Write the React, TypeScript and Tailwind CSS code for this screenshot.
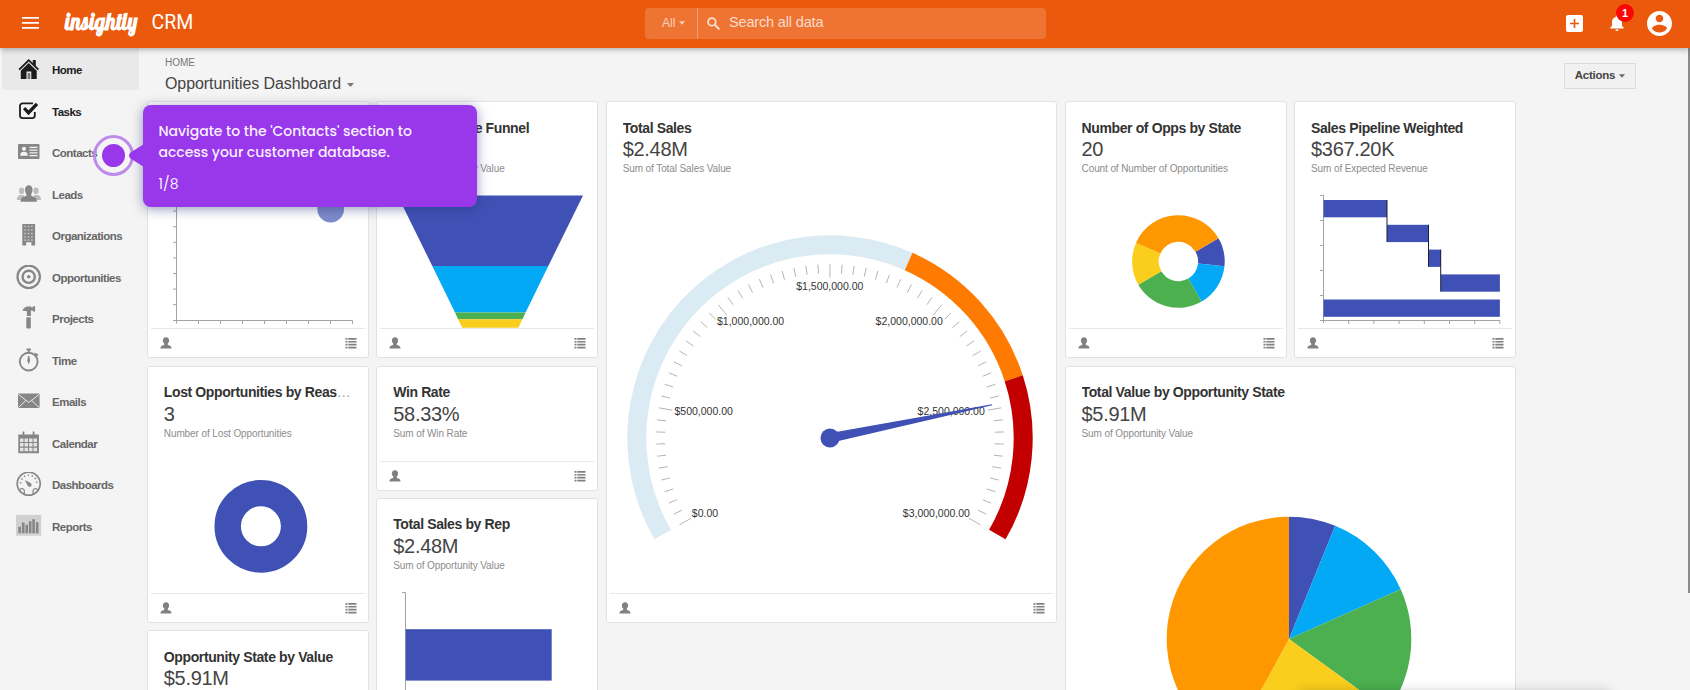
import type { ReactNode } from 'react';
import clsx from 'clsx';

const BLUE = '#3f51b5';
const SKY = '#03a9f4';
const GREEN = '#4caf50';
const YELLOW = '#f9ce1d';
const ORANGE = '#ff9800';

// Angles are clockwise degrees from twelve o'clock
function polar(cx: number, cy: number, r: number, deg: number) {
    const rad = (deg * Math.PI) / 180;
    return [cx + r * Math.sin(rad), cy - r * Math.cos(rad)];
}

function arcPath(cx: number, cy: number, outer: number, inner: number, from: number, to: number) {
    const [x1, y1] = polar(cx, cy, outer, from);
    const [x2, y2] = polar(cx, cy, outer, to);
    const [x3, y3] = polar(cx, cy, inner, to);
    const [x4, y4] = polar(cx, cy, inner, from);
    const large = to - from > 180 ? 1 : 0;
    return `M${x1} ${y1}A${outer} ${outer} 0 ${large} 1 ${x2} ${y2}L${x3} ${y3}A${inner} ${inner} 0 ${large} 0 ${x4} ${y4}Z`;
}

/* ---------- Sidebar ---------- */

const navItems: { label: string; icon: ReactNode }[] = [
    {
        label: 'Home',
        icon: (
            <>
                <path d="M12.7 2 2.5 12l1.3 1.3 9-8.7 8.9 8.7L23 12l-3.2-3.2V3h-3v2.9z" />
                <path d="M4.8 13.7v8.3h5.7v-7.5h4.8V22h5.4v-8.3l-8-7.6z" />
                <path d="M11.7 16h2.5v6h-2.5z" opacity=".55" />
            </>
        ),
    },
    {
        label: 'Tasks',
        icon: (
            <>
                <path d="M17 4.4H6.5A2.5 2.5 0 0 0 4 6.9v9.7a2.5 2.5 0 0 0 2.5 2.5h9.8a2.5 2.5 0 0 0 2.5-2.5V13" fill="none" stroke="currentColor" strokeWidth="1.8" />
                <path d="m7 10.2 2.2-2.1 3.3 3.2 7.3-7.6L22.2 6l-9.7 10.3z" />
            </>
        ),
    },
    {
        label: 'Contacts',
        icon: (
            <>
                <rect x="2" y="4" width="21.5" height="15" rx="1" />
                <circle cx="8" cy="8.8" r="2.1" fill="#f4f4f4" />
                <path d="M4.2 15.7c0-3 1.5-3.9 3.8-3.9s3.8.9 3.8 3.9z" fill="#f4f4f4" />
                <path d="M13.5 7.3h8M13.5 10.1h8M13.5 12.9h8M13.5 15.7h8" stroke="#f4f4f4" strokeWidth="1.2" />
            </>
        ),
    },
    {
        label: 'Leads',
        icon: (
            <>
                <g opacity=".5">
                    <ellipse cx="5.6" cy="8.8" rx="2.6" ry="3.4" />
                    <ellipse cx="20" cy="8.8" rx="2.6" ry="3.4" />
                    <path d="M1 18c0-3.8 1.3-4.1 3.3-5h3.6v5zM25 18c0-3.8-1.3-4.1-3.3-5h-3.6v5z" />
                </g>
                <ellipse cx="12.8" cy="8" rx="3.8" ry="4.8" />
                <path d="M4.6 19.7c0-4 1.8-4.4 5.8-6V11h4.8v2.7c4 1.6 5.8 2 5.8 6z" />
            </>
        ),
    },
    {
        label: 'Organizations',
        icon: (
            <>
                <path d="M6.3 1h12.8v21.6h-3.7v-3.4h-5.3v3.4H6.3z" />
                <path d="M8.2 3.5h9M8.2 7h9M8.2 10.5h9M8.2 14h9M8.2 17.2h9" stroke="#f4f4f4" strokeWidth="1.7" strokeDasharray="1.8 1.6" opacity=".5" />
            </>
        ),
    },
    {
        label: 'Opportunities',
        icon: (
            <>
                <circle cx="12.7" cy="11.8" r="11.2" fill="none" stroke="currentColor" strokeWidth="2.2" />
                <circle cx="12.7" cy="11.8" r="6.1" fill="none" stroke="currentColor" strokeWidth="2.4" />
                <circle cx="12.7" cy="11.8" r="1.8" />
            </>
        ),
    },
    {
        label: 'Projects',
        icon: (
            <path d="M6.4 4.7C7.2 1.9 9.5.3 12.3.4h3v1.2h1.5V.2h2.3v5.4h-2.3V4.4h-1.9v5.5h-4V5.3C9 4.6 7.8 4.6 6.4 4.7zM10.3 11.2h4.5v10a1.4 1.4 0 0 1-1.4 1.4h-1.7a1.4 1.4 0 0 1-1.4-1.4z" />
        ),
    },
    {
        label: 'Time',
        icon: (
            <>
                <circle cx="12.7" cy="13.6" r="8.9" fill="none" stroke="currentColor" strokeWidth="1.9" />
                <path d="M10.5.6h4.4v1.9h-1.3v3h-1.8v-3h-1.3zM18.6 4.6l3.8 1.8-1.1 2.2-2.7-2.1zM12 8h1.4l.7 4.8-1.4 3.8-1.4-3.8z" />
            </>
        ),
    },
    {
        label: 'Emails',
        icon: (
            <>
                <rect x="2" y="4.6" width="21.6" height="14.4" rx="1" />
                <path d="m2.5 5.5 10.3 8 10.3-8M2.5 18.5l7.5-7.2M23.1 18.5l-7.5-7.2" fill="none" stroke="#f4f4f4" strokeWidth=".9" />
            </>
        ),
    },
    {
        label: 'Calendar',
        icon: (
            <>
                <path d="M2.3 3.4h20.6v18.9H2.3zM6.6.5h1.8v3H6.6zM16.7.5h1.8v3h-1.8z" />
                <path d="M4 7.4h3.5v3.5H4zM8.5 7.4H12v3.5H8.5zM13 7.4h3.5v3.5H13zM17.5 7.4H21v3.5h-3.5zM4 12h3.5v3.5H4zM8.5 12H12v3.5H8.5zM13 12h3.5v3.5H13zM17.5 12H21v3.5h-3.5zM4 16.7h3.5v3.5H4zM8.5 16.7H12v3.5H8.5zM13 16.7h3.5v3.5H13zM17.5 16.7H21v3.5h-3.5z" fill="#f4f4f4" opacity=".85" />
            </>
        ),
    },
    {
        label: 'Dashboards',
        icon: (
            <>
                <circle cx="12.7" cy="11.7" r="11.5" fill="none" stroke="currentColor" strokeWidth="1.7" />
                <path d="M4.6 11.4a8.1 8.1 0 0 1 16.2 0" fill="none" stroke="currentColor" strokeWidth="1.6" strokeDasharray="1.3 2.6" />
                <path d="m8.8 8 5.8 3.1a2 2 0 1 1-2.8 2.6z" />
                <path d="M3.6 18.3c.8-2.3 4.4-2.2 4.7.2v3.4M21.8 18.3c-.8-2.3-4.4-2.2-4.7.2v3.4" fill="none" stroke="currentColor" strokeWidth="1.2" />
            </>
        ),
    },
    {
        label: 'Reports',
        icon: (
            <>
                <path d="M0 .9h25.2v20.8H0z" opacity=".32" />
                <path d="M2.3 12.7h2.6v6.6H2.3zM5.9 8.6h2.6v10.7H5.9zM9.4 10.7H12v8.6H9.4zM12.9 7.3h2.6v12h-2.6zM16.3 5.2h2.6v14.1h-2.6zM19.9 8.3h2.6v11h-2.6z" />
            </>
        ),
    },
];

function Sidebar() {
    return (
        <nav className="w-[139px] shrink-0 pl-0.5">
            {navItems.map(({ label, icon }, i) => (
                <a
                    key={label}
                    className={clsx(
                        'flex h-[41.5px] items-center rounded-b pl-3.5',
                        i === 0 && 'bg-[#e9e9e9]',
                        i < 2 ? 'text-[#1c1c1c]' : 'text-[#666]',
                    )}
                >
                    <svg
                        className={clsx('mt-[3px] h-[26px] w-[26px] shrink-0', i > 1 && 'text-[#868686]')}
                        viewBox="0 0 26 26"
                        fill="currentColor"
                    >
                        {icon}
                    </svg>
                    <span className="mt-1 ml-2.5 text-[11.5px] font-bold tracking-[-0.5px]">{label}</span>
                </a>
            ))}
        </nav>
    );
}

/* ---------- Header ---------- */

function Caret({ className }: { className?: string }) {
    return (
        <svg className={clsx('h-[4px]', className)} viewBox="0 0 7 4" fill="currentColor">
            <path d="M0 0h7L3.5 4z" />
        </svg>
    );
}

function Header() {
    return (
        <header className="relative z-10 flex h-12 items-center bg-[#eb5a0c] pb-0.5 text-white shadow-[0_1px_6px_rgba(0,0,0,0.35)]">
            <div className="flex w-[645px] items-center">
                <svg className="ml-[22px] h-3 w-[17px]" viewBox="0 0 17 12" fill="currentColor">
                    <path d="M0 0h17v1.7H0zM0 5h17v1.7H0zM0 10h17v1.7H0z" />
                </svg>
                <span className="-mt-0.5 ml-[26px] inline-block w-[73px] origin-left scale-x-[0.9] font-[Lobster,Lato,sans-serif] text-[23.5px] leading-none font-bold whitespace-nowrap">
                    insightly
                </span>
                <span className="ml-[13.5px] font-[Roboto,sans-serif] text-[19.5px] leading-none">CRM</span>
            </div>
            <div className="flex h-[31px] w-[401px] items-center rounded-sm bg-white/16 text-white/75">
                <div className="flex h-full w-[53px] items-center border-r border-white/30 pl-[17px] text-xs text-white/65">
                    All
                    <Caret className="ml-1 w-[6px]" />
                </div>
                <svg className="ml-[9px] h-[13px] w-[13px]" viewBox="0 0 12 12" fill="none" stroke="currentColor">
                    <circle cx="4.5" cy="4.5" r="3.5" strokeWidth="1.7" />
                    <path d="m7.2 7.2 4.2 4.2" strokeWidth="2" />
                </svg>
                <span className="ml-[9px] text-[14.5px] tracking-[-0.16px]">Search all data</span>
            </div>
            <div className="ml-auto flex items-center pr-[18px]">
                <svg className="h-[17px] w-[17px]" viewBox="0 0 17 17">
                    <rect width="17" height="17" rx="2" fill="#fff" />
                    <path d="M8.5 4v9M4 8.5h9" stroke="#eb5a0c" strokeWidth="1.7" />
                </svg>
                <div className="relative ml-[27px]">
                    <svg className="h-4 w-3.5" viewBox="0 0 14 16" fill="#fff">
                        <path d="M7 .2a1.2 1.2 0 0 0-1.2 1.2v.5C3.4 2.5 2 4.5 2 7v4L.3 12.6v.9h13.4v-.9L12 11V7c0-2.5-1.4-4.5-3.8-5.1v-.5A1.2 1.2 0 0 0 7 .2zM5.4 14.4a1.6 1.6 0 0 0 3.2 0z" />
                    </svg>
                    <span className="absolute -top-[11px] left-[6px] flex h-[18px] w-[18px] items-center justify-center rounded-full bg-[#fb0505] text-[11px] font-bold">
                        1
                    </span>
                </div>
                <svg className="ml-[23px] h-[25px] w-[25px]" viewBox="2 2 20 20" fill="#fff">
                    <path d="M12 2C6.48 2 2 6.48 2 12s4.48 10 10 10 10-4.48 10-10S17.52 2 12 2zm0 3c1.66 0 3 1.34 3 3s-1.34 3-3 3-3-1.34-3-3 1.34-3 3-3zm0 14.2c-2.5 0-4.71-1.28-6-3.22.03-1.99 4-3.08 6-3.08 1.99 0 5.97 1.09 6 3.08-1.29 1.94-3.5 3.22-6 3.22z" />
                </svg>
            </div>
        </header>
    );
}

/* ---------- Cards ---------- */

type CardProps = {
    title: string;
    value?: string;
    caption?: string;
    className?: string;
    children?: ReactNode;
};

function Card({ title, value, caption, className, children }: CardProps) {
    return (
        <section className={clsx('flex flex-col rounded-[3px] border border-[#e2e2e2] bg-white', className)}>
            <div className="h-20 shrink-0 pt-[16.2px] pr-[17px] pl-[15.8px]">
                <h2 className="truncate text-sm leading-[18.6px] tracking-[-0.38px] text-[#999]">
                    <span className="font-bold text-[#333]">{title}</span>
                </h2>
                <p className="h-6 text-[20px] leading-6 tracking-[-0.3px] text-[#444]">{value}</p>
                <p className="text-[10px] leading-[15px] tracking-[-0.1px] text-[#8c8c8c]">{caption}</p>
            </div>
            <div className="min-h-0 flex-1">{children && <svg className="block h-full w-full">{children}</svg>}</div>
            <div className="mx-[3px] flex h-[29px] shrink-0 items-center justify-between border-t border-[#e8e8e8] pr-2 pl-[9px] text-[#808080]">
                <svg className="h-3 w-3" viewBox="0 0 12 12" fill="currentColor">
                    <path d="M6 .3c2.1 0 3.1 1.4 3.1 3.2 0 1.4-.6 2.5-1.3 3.1v1.3c2.6.9 3.7 1 3.7 3.6H.5c0-2.6 1.1-2.7 3.7-3.6V6.6C3.5 6 2.9 4.9 2.9 3.5 2.9 1.7 3.9.3 6 .3z" />
                </svg>
                <svg className="h-3 w-3" viewBox="0 0 12 12" fill="currentColor">
                    <path d="M.5 1h2v1.7h-2zM3.3 1h8.2v1.7H3.3zM.5 3.9h2v1.7h-2zM3.3 3.9h8.2v1.7H3.3zM.5 6.8h2v1.7h-2zM3.3 6.8h8.2v1.7H3.3zM.5 9.7h2v1.7h-2zM3.3 9.7h8.2v1.7H3.3z" />
                </svg>
            </div>
        </section>
    );
}

function BubbleChart() {
    return (
        <>
            <g stroke="#a0a4a4">
                <path d="M28.5 12.5v129M25 138.5h179.5" fill="none" />
                {Array.from({ length: 8 }, (_, i) => (
                    <path key={i} d={`M25 ${13.5 + i * 15.6}h3.5`} />
                ))}
                {Array.from({ length: 8 }, (_, i) => (
                    <path key={i} d={`M${50.5 + i * 22} 138.5v3.5`} />
                ))}
            </g>
            <circle cx="182.7" cy="27.2" r="13.3" fill="#7f8ccb" />
        </>
    );
}

function FunnelChart() {
    const levels = [
        { y: 13.5, half: 92.7, color: BLUE },
        { y: 84, half: 58, color: SKY },
        { y: 130.4, half: 35.3, color: GREEN },
        { y: 137.2, half: 32.2, color: YELLOW },
        { y: 145.8, half: 28, color: '' },
    ];
    const cx = 113.3;
    return (
        <>
            {levels.slice(0, -1).map((a, i) => {
                const b = levels[i + 1];
                return (
                    <path
                        key={a.color}
                        d={`M${cx - a.half} ${a.y}H${cx + a.half}L${cx + b.half} ${b.y}H${cx - b.half}Z`}
                        fill={a.color}
                    />
                );
            })}
        </>
    );
}

type SlicesProps = {
    cx: number;
    cy: number;
    outer: number;
    inner: number;
    stops: [number, number, string][];
};

function Slices({ cx, cy, outer, inner, stops }: SlicesProps) {
    return (
        <>
            {stops.map(([from, to, color]) => (
                <path key={from} d={arcPath(cx, cy, outer, inner, from, to)} fill={color} />
            ))}
        </>
    );
}

const gaugeLabels: [string, number, number][] = [
    ['$0.00', 98, 334.8],
    ['$500,000.00', 96.7, 233],
    ['$1,000,000.00', 143.6, 143],
    ['$1,500,000.00', 222.8, 108],
    ['$2,000,000.00', 302.2, 143],
    ['$2,500,000.00', 344.2, 233],
    ['$3,000,000.00', 329.4, 334.8],
];

function GaugeChart() {
    const cx = 223;
    const cy = 256;
    return (
        <>
            <path d={arcPath(cx, cy, 202.7, 183.7, -120, 24)} fill="#dbebf3" />
            <path d={arcPath(cx, cy, 202.7, 183.7, 24, 72)} fill="#ff7a00" />
            <path d={arcPath(cx, cy, 202.7, 183.7, 72, 120)} fill="#c20000" />
            {Array.from({ length: 61 }, (_, i) => {
                const major = i % 10 === 0;
                const [x1, y1] = polar(cx, cy, 173.8, i * 4 - 120);
                const [x2, y2] = polar(cx, cy, major ? 160.5 : 164.8, i * 4 - 120);
                return <path key={i} d={`M${x1} ${y1}L${x2} ${y2}`} stroke="#b5b5b5" />;
            })}
            {gaugeLabels.map(([text, x, y]) => (
                <text key={text} x={x} y={y} textAnchor="middle" className="fill-[#333] text-[10.5px]">
                    {text}
                </text>
            ))}
            <path d="M0 -4.8V4.8L165.5 .5V-.5Z" transform={`translate(${cx} ${cy}) rotate(-11.6)`} fill={BLUE} />
            <circle cx={cx} cy={cy} r="9.5" fill={BLUE} />
        </>
    );
}

function WaterfallChart() {
    const bars = [
        [28.5, 18, 63.5],
        [92, 42.8, 41.7],
        [133.7, 67.6, 12.2],
        [145.9, 92.4, 59],
        [28.5, 117.5, 176.4],
    ];
    return (
        <>
            <g stroke="#a0a4a4" fill="none">
                <path d="M28.5 13v128M25 138.5h180" />
                {Array.from({ length: 5 }, (_, i) => (
                    <path key={i} d={`M25 ${13.5 + i * 25}h3.5`} />
                ))}
                {Array.from({ length: 7 }, (_, i) => (
                    <path key={i} d={`M${53.7 + i * 25.2} 138.5v3.5`} />
                ))}
            </g>
            {bars.map(([x, y, w]) => (
                <rect key={y} x={x} y={y} width={w} height="17.3" fill={BLUE} />
            ))}
            <path d="M92 18v42M133.5 42.8v42M145.7 67.6v42" stroke="#1c1f33" />
        </>
    );
}

function HBarChart() {
    return (
        <>
            <path d="M25 13.5h3.5V160" stroke="#a0a4a4" fill="none" />
            <rect x="28.7" y="50.2" width="146" height="51.4" fill={BLUE} />
        </>
    );
}

function Tour() {
    return (
        <>
            <div className="absolute top-[135px] left-[92.5px] z-20 flex h-[41px] w-[41px] items-center justify-center rounded-full border-[3px] border-[#bd8beb]">
                <div className="h-[23px] w-[23px] shrink-0 rounded-full bg-[#9937ea]" />
            </div>
            <div className="absolute top-[105px] left-[143px] z-20 h-[101.5px] w-[334px] rounded-lg bg-[#9937ea] px-[15.5px] pt-4 font-[Poppins,Inter,sans-serif] text-sm leading-[21px] text-[#f8efff] shadow-[0_2px_12px_rgba(40,50,120,0.5)]">
                <p className="font-medium tracking-[-0.03px] whitespace-nowrap">
                    Navigate to the 'Contacts' section to
                    <br />
                    access your customer database.
                </p>
                <p className="mt-[11px]">1/8</p>
                <svg className="absolute top-[39px] -left-3.5 h-[23px] w-[15px]" viewBox="0 0 15 23" fill="#9937ea">
                    <path d="M15 0v23L1.5 14.5q-3-3 0-6z" />
                </svg>
            </div>
        </>
    );
}

export default function App() {
    return (
        <div className="relative h-[690px] w-[1690px] overflow-hidden bg-[#f4f4f4] font-['Liberation_Sans',Arial,sans-serif]">
            <Header />
            <div className="flex">
                <Sidebar />
                <main className="flex-1 pl-2">
                    <div className="flex h-[53.4px] items-start justify-between pr-[54px] pl-[18px]">
                        <div>
                            <p className="mt-[7.5px] text-[10px] leading-[14px] text-[#777]">HOME</p>
                            <h1 className="mt-1 flex items-center text-base leading-5 tracking-[-0.08px] text-[#444]">
                                Opportunities Dashboard
                                <Caret className="mt-0.5 ml-[6px] w-[7px] text-[#777]" />
                            </h1>
                        </div>
                        <button className="mt-[15px] flex h-[26px] w-[72px] items-center justify-center border border-[#dcdcdc] bg-[#f1f1f1] text-[11.5px] font-bold tracking-[-0.25px] text-[#444]">
                            Actions
                            <Caret className="ml-1 w-[6px] text-[#666]" />
                        </button>
                    </div>
                    <div className="grid auto-rows-[124.65px] grid-cols-[repeat(6,221.85px)] gap-[7.6px]">
                        <Card title="Opportunities" className="row-span-2">
                            <BubbleChart />
                        </Card>
                        <Card title="Sales Pipeline Funnel" caption="Sum of Opportunity Value" className="row-span-2">
                            <FunnelChart />
                        </Card>
                        <Card title="Total Sales" value="$2.48M" caption="Sum of Total Sales Value" className="col-span-2 row-span-4">
                            <GaugeChart />
                        </Card>
                        <Card title="Number of Opps by State" value="20" caption="Count of Number of Opportunities" className="row-span-2">
                            <Slices
                                cx={112.4}
                                cy={79.5}
                                outer={46.3}
                                inner={19.7}
                                stops={[
                                    [60, 96, BLUE],
                                    [96, 150, SKY],
                                    [150, 240, GREEN],
                                    [240, 294, YELLOW],
                                    [294, 420, ORANGE],
                                ]}
                            />
                        </Card>
                        <Card title="Sales Pipeline Weighted" value="$367.20K" caption="Sum of Expected Revenue" className="row-span-2">
                            <WaterfallChart />
                        </Card>
                        <Card title="Lost Opportunities by Reason" value="3" caption="Number of Lost Opportunities" className="row-span-2">
                            <circle cx="112.9" cy="79.3" r="33.2" fill="none" stroke={BLUE} strokeWidth="26.4" />
                        </Card>
                        <Card title="Win Rate" value="58.33%" caption="Sum of Win Rate" />
                        <Card title="Total Value by Opportunity State" value="$5.91M" caption="Sum of Opportunity Value" className="col-span-2 row-span-4">
                            <Slices
                                cx={223}
                                cy={192}
                                outer={122.3}
                                inner={0}
                                stops={[
                                    [0, 22.2, BLUE],
                                    [22.2, 66, SKY],
                                    [66, 126, GREEN],
                                    [126, 208.6, YELLOW],
                                    [208.6, 360, ORANGE],
                                ]}
                            />
                        </Card>
                        <Card title="Total Sales by Rep" value="$2.48M" caption="Sum of Opportunity Value" className="col-start-2 row-span-2">
                            <HBarChart />
                        </Card>
                        <Card title="Opportunity State by Value" value="$5.91M" caption="Sum of Opportunity Value" className="col-start-1 row-span-2 row-start-5" />
                    </div>
                </main>
            </div>
            <Tour />
            <div className="absolute top-12 right-0 h-[545px] w-0.5 bg-[#8a8a8a]" />
            {/* Docked panel sits just under the fold, only its shadow shows */}
            <div className="absolute top-[692px] left-[1300px] h-10 w-[310px] shadow-[0_0_12px_rgba(0,0,0,0.22)]" />
        </div>
    );
}
